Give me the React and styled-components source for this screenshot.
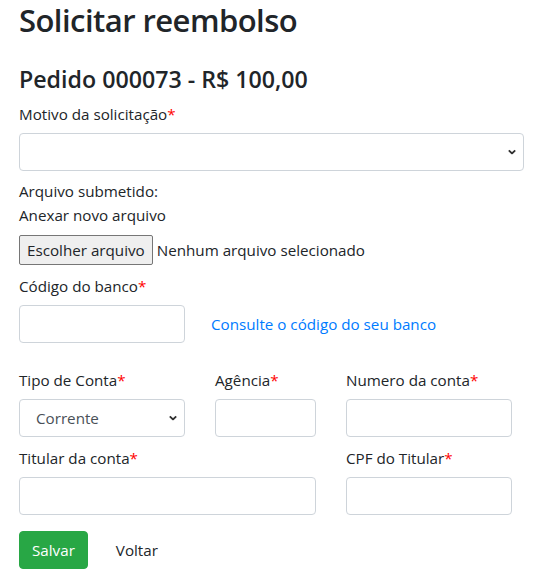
import React from "react";
import styled, { createGlobalStyle } from "styled-components";

const Global = createGlobalStyle`
  html, body { margin: 0; padding: 0; background: #fff; }
  body {
    font-family: "Open Sans", "Noto Sans", sans-serif;
    font-size: 15.2px;
    line-height: 24px;
    color: #212529;
  }
  * { box-sizing: border-box; }
`;

const Page = styled.div`
  padding: 0 10px 0 19px;
`;

const Title = styled.h1`
  margin: 0 0 24px;
  font-size: 31px;
  font-weight: 600;
  letter-spacing: -0.55px;
  line-height: 40px;
`;

const Subtitle = styled.h2`
  margin: 0 0 8px;
  font-size: 23.2px;
  font-weight: 600;
  letter-spacing: 0;
  line-height: 30px;
`;

const Label = styled.label`
  display: block;
  margin-bottom: 7px;
  line-height: 24px;
`;

const Req = styled.span`
  color: #ff0000;
`;

const Group = styled.div`
  margin-bottom: ${(p) => p.$mb ?? 8}px;
  margin-top: ${(p) => p.$mt ?? 0}px;
`;

const Line = styled.div`
  line-height: 24px;
`;

const SelectWrap = styled.div`
  position: relative;
  width: 100%;
`;

const Select = styled.select`
  appearance: none;
  -webkit-appearance: none;
  display: block;
  width: 100%;
  height: 38px;
  padding: 6px 24px 6px ${(p) => p.$pl ?? 12}px;
  font: inherit;
  color: #495057;
  background: #fff;
  border: 1px solid #ced4da;
  border-radius: 4px;
`;

const Chevron = styled.svg`
  position: absolute;
  right: 8px;
  top: 50%;
  transform: translateY(-50%);
  width: 8px;
  height: 5px;
  pointer-events: none;
`;

const Input = styled.input`
  display: block;
  width: 100%;
  height: 38px;
  padding: 6px 12px;
  font: inherit;
  border: 1px solid #ced4da;
  border-radius: 4px;
  background: #fff;
`;

const FileRow = styled.div`
  display: flex;
  align-items: center;
  gap: 4px;
`;

const FileButton = styled.button`
  height: 30px;
  padding: 0 7px;
  font: inherit;
  color: #212529;
  background: #efefef;
  border: 1px solid #767676;
  border-radius: 2px;
`;

const Grid = styled.div`
  display: grid;
  grid-template-columns: 166px 101px 166px;
  column-gap: 30px;
  align-items: end;
`;

const Span2 = styled.div`
  grid-column: span 2;
`;

const LinkCell = styled.div`
  grid-column: span 2;
  display: flex;
  align-items: center;
  height: 38px;
  margin-left: -4px;
`;

const A = styled.a`
  color: #007bff;
  text-decoration: none;
`;

const Actions = styled.div`
  display: flex;
  align-items: center;
  gap: 15px;
  margin-top: 16px;
`;

const SaveButton = styled.button`
  height: 38px;
  padding: 0 12px;
  font: inherit;
  color: #fff;
  background: #28a745;
  border: 1px solid #28a745;
  border-radius: 4px;
`;

const BackButton = styled.button`
  height: 38px;
  padding: 0 12px;
  font: inherit;
  color: #212529;
  background: transparent;
  border: 1px solid transparent;
`;

const ChevronIcon = () => (
  <Chevron viewBox="0 0 8 5">
    <path d="M0.8 0.8 L4 4 L7.2 0.8" fill="none" stroke="#333" strokeWidth="1.8" />
  </Chevron>
);

export default function App() {
  return (
    <Page>
      <Global />
      <Title>Solicitar reembolso</Title>
      <Subtitle>Pedido 000073 - R$ 100,00</Subtitle>

      <Group $mb={8}>
        <Label>
          Motivo da solicitação<Req>*</Req>
        </Label>
        <SelectWrap>
          <Select defaultValue="">
            <option value=""></option>
          </Select>
          <ChevronIcon />
        </SelectWrap>
      </Group>

      <Line>Arquivo submetido:</Line>
      <Line>Anexar novo arquivo</Line>
      <Group $mt={8} $mb={9}>
        <FileRow>
          <FileButton type="button">Escolher arquivo</FileButton>
          <span>Nenhum arquivo selecionado</span>
        </FileRow>
      </Group>

      <Group $mb={25}>
        <Label>
          Código do banco<Req>*</Req>
        </Label>
        <Grid>
          <Input />
          <LinkCell>
            <A href="#">Consulte o código do seu banco</A>
          </LinkCell>
        </Grid>
      </Group>

      <Group $mb={9}>
        <Grid>
          <div>
            <Label>
              Tipo de Conta<Req>*</Req>
            </Label>
            <SelectWrap>
              <Select $pl={16} defaultValue="corrente">
                <option value="corrente">Corrente</option>
                <option value="poupanca">Poupança</option>
              </Select>
              <ChevronIcon />
            </SelectWrap>
          </div>
          <div>
            <Label>
              Agência<Req>*</Req>
            </Label>
            <Input />
          </div>
          <div>
            <Label>
              Numero da conta<Req>*</Req>
            </Label>
            <Input />
          </div>
        </Grid>
      </Group>

      <Group $mb={0}>
        <Grid>
          <Span2>
            <Label>
              Titular da conta<Req>*</Req>
            </Label>
            <Input />
          </Span2>
          <div>
            <Label>
              CPF do Titular<Req>*</Req>
            </Label>
            <Input />
          </div>
        </Grid>
      </Group>

      <Actions>
        <SaveButton type="button">Salvar</SaveButton>
        <BackButton type="button">Voltar</BackButton>
      </Actions>
    </Page>
  );
}
